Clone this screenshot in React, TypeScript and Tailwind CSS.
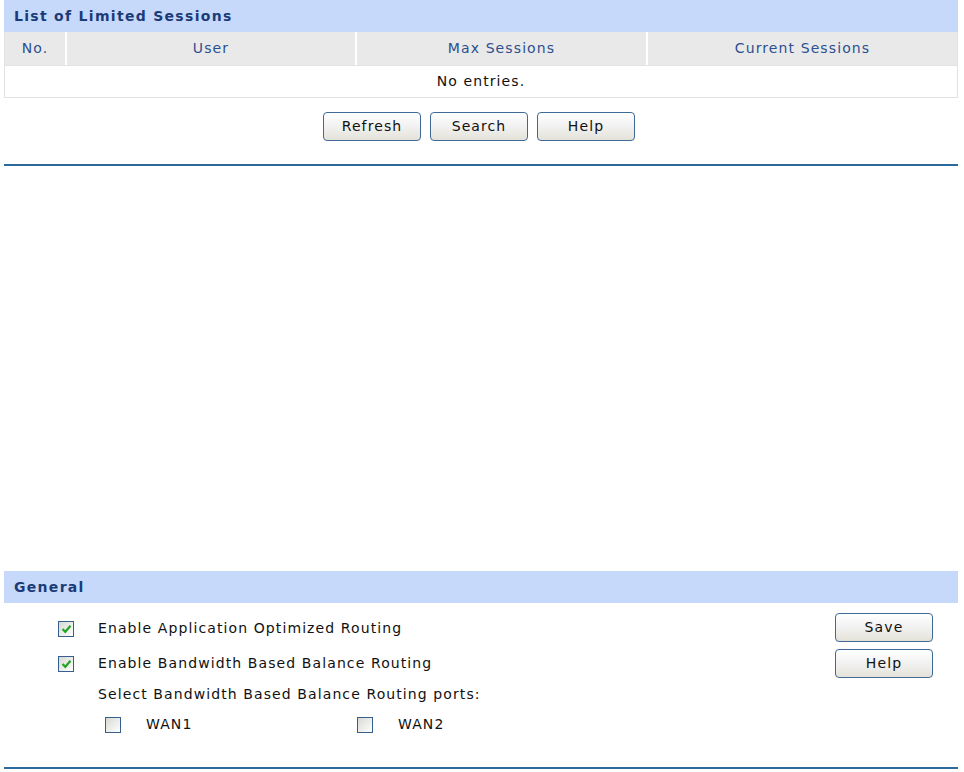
import React from 'react';

const font = { fontFamily: '"DejaVu Sans", Verdana, sans-serif' };

const Button = ({ label }: { label: string }) => (
  <button
    type="button"
    className="h-[29px] w-[98px] rounded-[4px] border border-[#3f6a98] bg-gradient-to-b from-white via-[#f1f1f1] to-[#e4e2d8] text-[14px] tracking-[1.1px] text-[#111]"
  >
    {label}
  </button>
);

const Checkbox = ({ checked }: { checked?: boolean }) => (
  <span className="flex h-[16px] w-[16px] shrink-0 items-center justify-center border border-[#35608e] bg-gradient-to-br from-[#d8d8d2] to-white">
    {checked && (
      <svg width="11" height="10" viewBox="0 0 11 10">
        <path d="M1.5 5 L4.3 7.8 L9.5 1.8" fill="none" stroke="#22a522" strokeWidth="2.2" />
      </svg>
    )}
  </span>
);

const SectionBar = ({ title }: { title: string }) => (
  <div className="flex h-[32px] items-center bg-[#c6d9fb] pl-[10px] text-[14px] font-bold tracking-[1.3px] text-[#1b3b78]">
    {title}
  </div>
);

const columns = [
  { name: 'No.', w: 'w-[60px]' },
  { name: 'User', w: 'w-[290px]' },
  { name: 'Max Sessions', w: 'w-[291px]' },
  { name: 'Current Sessions', w: 'flex-1' },
];

export default function App() {
  return (
    <div className="min-h-[772px] bg-white pl-[4px]" style={font}>
      <div className="w-[954px]">
        {/* Limited sessions list */}
        <SectionBar title="List of Limited Sessions" />
        <div className="border border-t-0 border-[#e2e2e2]">
          <div className="flex h-[33px] bg-[#e9e9e9]">
            {columns.map((c, i) => (
              <div
                key={c.name}
                className={`${c.w} flex items-center justify-center text-[14px] tracking-[1.1px] text-[#2d4f8f] ${
                  i > 0 ? 'border-l-2 border-white' : ''
                }`}
              >
                {c.name}
              </div>
            ))}
          </div>
          <div className="flex h-[32px] items-center justify-center border-t border-[#e2e2e2] text-[14px] tracking-[1.1px] text-[#111]">
            No entries.
          </div>
        </div>
        <div className="mt-[14px] flex justify-center gap-[9px] pr-[4px]">
          <Button label="Refresh" />
          <Button label="Search" />
          <Button label="Help" />
        </div>
        <div className="mt-[23px] h-[2px] bg-[#2c6a9c]" />

        {/* General */}
        <div className="mt-[405px]">
          <SectionBar title="General" />
          <div className="flex pt-[8px] text-[14px] tracking-[1.1px] text-[#111]">
            <div className="flex-1">
              <div className="flex h-[35px] items-center pl-[54px]">
                <Checkbox checked />
                <span className="ml-[24px]">Enable Application Optimized Routing</span>
              </div>
              <div className="flex h-[35px] items-center pl-[54px]">
                <Checkbox checked />
                <span className="ml-[24px]">Enable Bandwidth Based Balance Routing</span>
              </div>
              <div className="flex h-[26px] items-center pl-[94px]">
                Select Bandwidth Based Balance Routing ports:
              </div>
              <div className="flex h-[35px] items-center pl-[101px]">
                <div className="flex w-[252px] items-center">
                  <Checkbox />
                  <span className="ml-[25px]">WAN1</span>
                </div>
                <div className="flex items-center">
                  <Checkbox />
                  <span className="ml-[25px]">WAN2</span>
                </div>
              </div>
            </div>
            <div className="flex flex-col gap-[7px] pr-[25px] pt-[2px]">
              <Button label="Save" />
              <Button label="Help" />
            </div>
          </div>
          <div className="mt-[25px] h-[2px] bg-[#2c6a9c]" />
        </div>
      </div>
    </div>
  );
}
